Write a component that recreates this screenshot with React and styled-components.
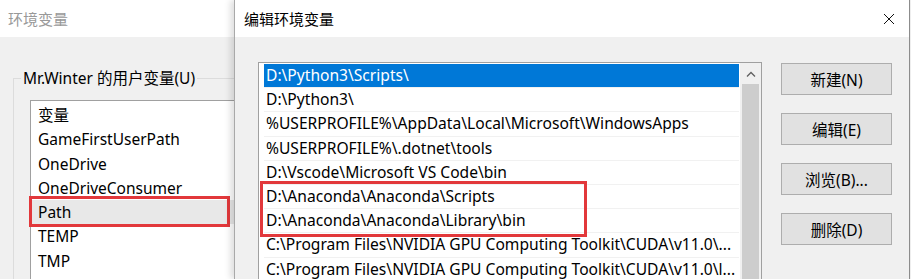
import React from "react"
import styled, { createGlobalStyle } from "styled-components"

const GlobalStyle = createGlobalStyle`
  body {
    margin: 0;
    background: #f0f0f0;
    font-family: "Noto Sans", "Noto Sans CJK SC", sans-serif;
  }
`

const FONT = `"Noto Sans", "Noto Sans CJK SC", sans-serif`

const Screen = styled.div`
  display: flex;
  width: 911px;
  height: 279px;
  overflow: hidden;
  background: #f0f0f0;
  font-family: ${FONT};
`

const EnvWindow = styled.div`
  width: 234px;
  flex: none;
  display: flex;
  flex-direction: column;
  overflow: hidden;
`

const TitleBar = styled.div`
  height: 37px;
  flex: none;
  display: flex;
  align-items: center;
  justify-content: space-between;
  padding: 0 14px 0 ${props => props.$indent}px;
  background: #fff;
  color: ${props => props.$color};
  font-size: 15px;
`

const WindowBody = styled.div`
  flex: 1;
  background: #f0f0f0;
  padding: 31px 0 0 13px;
`

const GroupBox = styled.fieldset`
  width: 320px;
  height: 260px;
  margin: 0;
  padding: 0 0 0 16px;
  border: 1px solid #dcdcdc;
  border-right: none;
`

const Legend = styled.legend`
  margin-left: -9px;
  padding: 0 2px;
  font-size: 15.5px;
  line-height: 20px;
  color: #000;
`

const VarList = styled.div`
  margin-top: 12px;
  height: 240px;
  background: #fff;
  border: 1px solid #a0a0a0;
  padding-top: 2px;
`

const VarRow = styled.div`
  position: relative;
  height: 24.3px;
  line-height: 24.3px;
  padding-left: 7px;
  font-size: 15.5px;
  color: #000;
  white-space: nowrap;
  background: ${props => (props.$active ? "#e8e8e8" : "transparent")};

  ${props =>
    props.$marked &&
    `
    &::after {
      content: "";
      position: absolute;
      left: -2px;
      top: -4px;
      width: 201px;
      height: 31px;
      box-sizing: border-box;
      border: 3px solid #e2383b;
    }
  `}
`

const Dialog = styled.div`
  width: 674px;
  flex: none;
  display: flex;
  flex-direction: column;
  border-left: 1px solid #a9a9a9;
  border-right: 1px solid #8c8c8c;
  box-shadow: -4px 0 6px rgba(0, 0, 0, 0.12);
  z-index: 1;
`

const CloseIcon = () => (
  <svg width="12" height="12" viewBox="0 0 12 12">
    <path d="M1 1 L11 11 M11 1 L1 11" stroke="#111" strokeWidth="1" fill="none" />
  </svg>
)

const DialogBody = styled.div`
  flex: 1;
  display: flex;
  align-items: flex-start;
  gap: 19px;
  padding: 25px 18px 0 23px;
  background: #f0f0f0;
`

const PathList = styled.div`
  width: 502px;
  height: 240px;
  flex: none;
  display: flex;
  background: #fff;
  border: 1px solid #a0a0a0;
`

const PathRows = styled.div`
  flex: 1;
  padding: 1px 1px 0 5px;
`

const PathRow = styled.div`
  height: 24.2px;
  box-sizing: border-box;
  line-height: 23.5px;
  padding-left: 2px;
  font-size: 15.6px;
  white-space: nowrap;
  overflow: hidden;
  border-bottom: 1px solid #f1f1f1;
  color: ${props => (props.$selected ? "#fff" : "#000")};
  background: ${props => (props.$selected ? "#0078d7" : "#fff")};
`

const MarkGroup = styled.div`
  position: relative;

  &::after {
    content: "";
    position: absolute;
    left: -4px;
    top: -4px;
    width: 327px;
    height: 56px;
    box-sizing: border-box;
    border: 3px solid #e2383b;
  }
`

const ScrollBar = styled.div`
  width: 21px;
  flex: none;
  display: flex;
  flex-direction: column;
  align-items: center;
  background: #f0f0f0;
`

const ScrollArrow = styled.div`
  height: 21px;
  display: flex;
  align-items: center;
  justify-content: center;
`

const ScrollThumb = styled.div`
  width: 17px;
  flex: 1;
  background: #cdcdcd;
`

const ButtonColumn = styled.div`
  display: flex;
  flex-direction: column;
  gap: 18px;
  margin-top: 1px;
`

const ActionButton = styled.button`
  width: 111px;
  height: 32px;
  padding: 0;
  background: #e1e1e1;
  border: 1px solid #adadad;
  font-family: ${FONT};
  font-size: 15.5px;
  color: #000;
`

const userVars = ["GameFirstUserPath", "OneDrive", "OneDriveConsumer", "Path", "TEMP", "TMP"]

const before = [
  "D:\\Python3\\Scripts\\",
  "D:\\Python3\\",
  "%USERPROFILE%\\AppData\\Local\\Microsoft\\WindowsApps",
  "%USERPROFILE%\\.dotnet\\tools",
  "D:\\Vscode\\Microsoft VS Code\\bin",
]

const marked = ["D:\\Anaconda\\Anaconda\\Scripts", "D:\\Anaconda\\Anaconda\\Library\\bin"]

const after = [
  "C:\\Program Files\\NVIDIA GPU Computing Toolkit\\CUDA\\v11.0\\...",
  "C:\\Program Files\\NVIDIA GPU Computing Toolkit\\CUDA\\v11.0\\l...",
]

export default function App() {
  return (
    <Screen>
      <GlobalStyle />
      <EnvWindow>
        <TitleBar $indent={8} $color="#999">环境变量</TitleBar>
        <WindowBody>
          <GroupBox>
            <Legend>Mr.Winter 的用户变量(U)</Legend>
            <VarList>
              <VarRow>变量</VarRow>
              {userVars.map(name => (
                <VarRow key={name} $active={name === "Path"} $marked={name === "Path"}>
                  {name}
                </VarRow>
              ))}
            </VarList>
          </GroupBox>
        </WindowBody>
      </EnvWindow>

      <Dialog>
        <TitleBar $indent={9} $color="#000">
          编辑环境变量
          <CloseIcon />
        </TitleBar>
        <DialogBody>
          <PathList>
            <PathRows>
              {before.map((p, i) => (
                <PathRow key={p} $selected={i === 0}>{p}</PathRow>
              ))}
              <MarkGroup>
                {marked.map(p => (
                  <PathRow key={p}>{p}</PathRow>
                ))}
              </MarkGroup>
              {after.map(p => (
                <PathRow key={p}>{p}</PathRow>
              ))}
            </PathRows>
            <ScrollBar>
              <ScrollArrow>
                <svg width="10" height="6" viewBox="0 0 10 6">
                  <path d="M1 5.5 L5 1.5 L9 5.5" stroke="#606060" strokeWidth="1.3" fill="none" />
                </svg>
              </ScrollArrow>
              <ScrollThumb />
            </ScrollBar>
          </PathList>
          <ButtonColumn>
            <ActionButton>新建(N)</ActionButton>
            <ActionButton>编辑(E)</ActionButton>
            <ActionButton>浏览(B)...</ActionButton>
            <ActionButton>删除(D)</ActionButton>
          </ButtonColumn>
        </DialogBody>
      </Dialog>
    </Screen>
  )
}
